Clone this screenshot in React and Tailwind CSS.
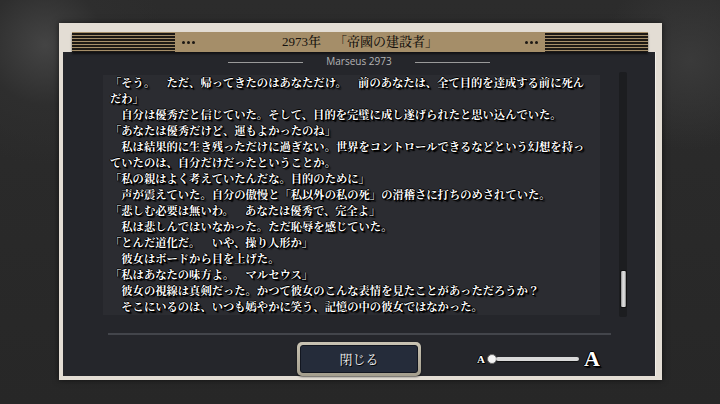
import React from "react";

const lines = [
  "「そう。　ただ、帰ってきたのはあなただけ。　前のあなたは、全て目的を達成する前に死ん",
  "だわ」",
  "　自分は優秀だと信じていた。そして、目的を完璧に成し遂げられたと思い込んでいた。",
  "「あなたは優秀だけど、運もよかったのね」",
  "　私は結果的に生き残っただけに過ぎない。世界をコントロールできるなどという幻想を持っ",
  "ていたのは、自分だけだったということか。",
  "「私の親はよく考えていたんだな。目的のために」",
  "　声が震えていた。自分の傲慢と「私以外の私の死」の滑稽さに打ちのめされていた。",
  "「悲しむ必要は無いわ。　あなたは優秀で、完全よ」",
  "　私は悲しんではいなかった。ただ恥辱を感じていた。",
  "「とんだ道化だ。　いや、操り人形か」",
  "　彼女はボードから目を上げた。",
  "「私はあなたの味方よ。　マルセウス」",
  "　彼女の視線は真剣だった。かつて彼女のこんな表情を見たことがあっただろうか？",
  "　そこにいるのは、いつも嫣やかに笑う、記憶の中の彼女ではなかった。",
];

function Dots() {
  return (
    <div className="flex gap-[2px] items-center">
      <div className="w-[3px] h-[3px] rounded-full bg-[#1c1814]" />
      <div className="w-[3px] h-[3px] rounded-full bg-[#1c1814]" />
      <div className="w-[3px] h-[3px] rounded-full bg-[#1c1814]" />
    </div>
  );
}

function Stripes() {
  return (
    <div className="w-[103px] h-full bg-[repeating-linear-gradient(to_bottom,#a58e69_0px,#a58e69_1.5px,#1d1915_1.5px,#1d1915_3px)]" />
  );
}

export default function App() {
  return (
    <div className="w-[720px] h-[404px] overflow-hidden bg-[#2a2a2a] bg-[radial-gradient(circle_at_45px_45px,#444444_0px,#2e2e2e_60px,transparent_120px),radial-gradient(circle_at_690px_60px,#3a3a3a_0px,transparent_90px),linear-gradient(#2c2c2c,#272727)] pl-[59px] pt-[23px]">
      {/* Frame */}
      <div className="w-[603px] h-[357px] bg-[#e3ddd4] flex flex-col shadow-[0_0_6px_rgba(0,0,0,0.6)]">
        {/* header area */}
        <div className="h-[30px] pt-[9px] pl-[13px]">
          <div className="w-[576px] h-[20px] bg-[#a58e69] flex items-center shadow-[0_2px_2px_rgba(0,0,0,0.55)] relative z-10">
            <Stripes />
            <div className="ml-[7px]">
              <Dots />
            </div>
            <div
              className="flex-1 text-center text-[13px] leading-[20px] text-[#15120e] font-medium [text-spacing-trim:space-all]"
              style={{ fontFamily: '"Liberation Serif", "Noto Serif CJK JP", "Noto Sans CJK JP", serif' }}
            >
              2973年　「帝國の建設者」
            </div>
            <div className="mr-[7px]">
              <Dots />
            </div>
            <Stripes />
          </div>
        </div>
        {/* panel */}
        <div className="flex-1 ml-[4px] mr-[6px] mb-[4px] bg-[#25262b] flex flex-col border-r border-[#f2eee8]">
          {/* Marseus */}
          <div className="h-[20px] flex items-center justify-center gap-[23px]">
            <div className="w-[75px] h-[1px] bg-[#9a9a9a]" />
            <div
              className="text-[10px] leading-[12px] text-[#b4b4b4] -mt-[2px]"
              style={{ fontFamily: '"Open Sans", "Noto Sans", sans-serif' }}
            >
              Marseus 2973
            </div>
            <div className="w-[75px] h-[1px] bg-[#9a9a9a]" />
          </div>
          {/* text + scrollbar */}
          <div className="flex items-center">
            <div className="ml-[40px] w-[497px] h-[240px] bg-[#2b2c31] overflow-hidden pl-[7px]">
              <div
                className="-mt-[1px] text-[11.3px] leading-[16px] text-white font-bold whitespace-nowrap [text-spacing-trim:space-all] [text-shadow:1px_1px_0_#000,-1px_0_0_#000,0_-1px_0_#000,1px_0_0_#000,0_1px_0_#000,2px_2px_1px_#000]"
                style={{ fontFamily: '"Noto Serif CJK JP", "Noto Sans CJK JP", sans-serif' }}
              >
                {lines.map((l, i) => (
                  <div key={i}>{l}</div>
                ))}
              </div>
            </div>
            <div className="ml-[19px] w-[8px] h-[245px] bg-[#1c1d20] rounded-[2px] flex flex-col justify-end pb-[9px] items-center">
              <div className="w-[7px] h-[38px] rounded-[2px] bg-[linear-gradient(to_right,#8a8a8a,#e2e2e2_40%,#d0d0d0_70%,#7a7a7a)] border border-[#111]" />
            </div>
          </div>
          {/* separator */}
          <div className="mt-[16px] ml-[45px] w-[503px] h-[2px] bg-[#43454b]" />
          {/* bottom row */}
          <div className="mt-[7px] h-[34px] grid grid-cols-[1fr_auto_1fr] items-center">
            <div />
            <div className="w-[124px] h-[34px] rounded-[5px] p-[3px] bg-[linear-gradient(#c9c3b3,#a49e8d)] shadow-[0_1px_2px_rgba(0,0,0,0.6)]">
              <div
                className="w-full h-full rounded-[3px] bg-[#252c3a] border border-[#121620] flex items-center justify-center text-[13px] text-[#f2f2f2] [text-shadow:1px_1px_0_#000]"
                style={{ fontFamily: '"Noto Serif CJK JP", "Noto Sans CJK JP", sans-serif' }}
              >
                閉じる
              </div>
            </div>
            <div className="flex items-center pl-[56px]">
              <span
                className="text-[11px] font-bold text-white leading-none [text-shadow:1px_1px_0_#000,-1px_0_0_#000,0_-1px_0_#000,1px_0_0_#000,0_1px_0_#000]"
                style={{ fontFamily: '"Liberation Serif", serif' }}
              >
                A
              </span>
              <div className="ml-[2px] w-[10px] h-[10px] rounded-full bg-[#f4f4f4] border border-[#666]" />
              <div className="-ml-[1px] w-[83px] h-[4px] rounded-full bg-[#d9d9d9] shadow-[0_1px_1px_rgba(0,0,0,0.6)]" />
              <span
                className="ml-[5px] text-[22px] font-bold text-white leading-none [text-shadow:1px_1px_0_#000,-1px_0_0_#000,0_-1px_0_#000,1px_0_0_#000,0_1px_0_#000,2px_2px_1px_#000]"
                style={{ fontFamily: '"Liberation Serif", serif' }}
              >
                A
              </span>
            </div>
          </div>
        </div>
      </div>
    </div>
  );
}
